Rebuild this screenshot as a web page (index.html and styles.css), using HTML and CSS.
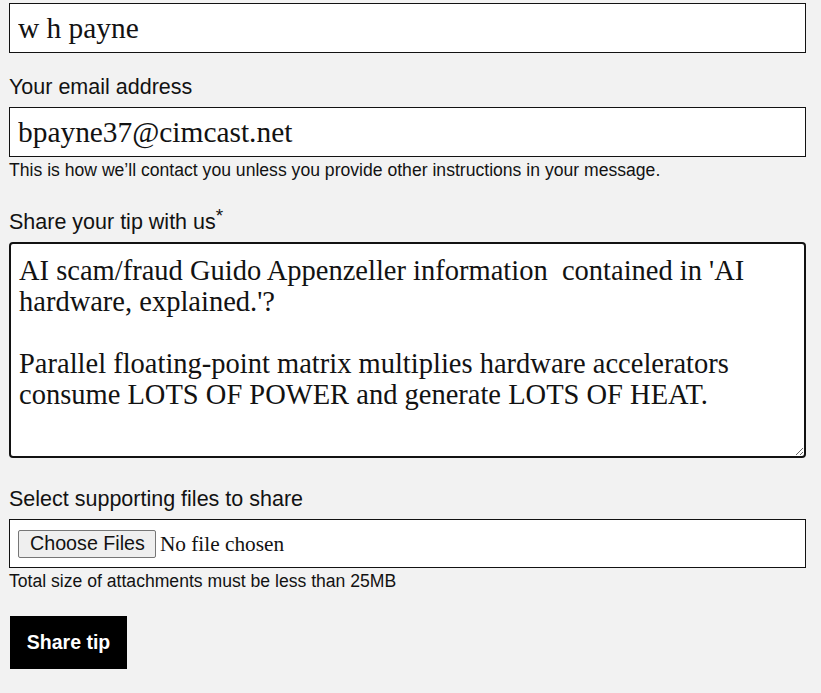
FILE: index.html
```html
<!DOCTYPE html>
<html lang="en">

<head>
    <meta charset="UTF-8">
    <meta name="viewport" content="width=device-width, initial-scale=1.0">
    <title>Share a tip</title>
    <link rel="stylesheet" href="styles.css">
</head>

<body>
    <form class="tipForm">
        <div class="field nameField">
            <input type="text" class="textInput" name="name" value="w h payne">
        </div>

        <div class="field emailField">
            <label class="fieldLabel" for="email">Your email address</label>
            <input type="email" class="textInput" id="email" name="email" value="bpayne37@cimcast.net">
            <p class="hint">This is how we’ll contact you unless you provide other instructions in your message.</p>
        </div>

        <div class="field tipField">
            <label class="fieldLabel" for="tip">Share your tip with us<sup class="req">*</sup></label>
            <textarea class="tipText" id="tip" name="tip">AI scam/fraud Guido Appenzeller information  contained in 'AI hardware, explained.'?

Parallel floating-point matrix multiplies hardware accelerators consume LOTS OF POWER and generate LOTS OF HEAT.</textarea>
        </div>

        <div class="field fileField">
            <label class="fieldLabel" for="files">Select supporting files to share</label>
            <div class="fileBox">
                <input type="file" id="files" name="files" multiple class="fileInput">
            </div>
            <p class="hint">Total size of attachments must be less than 25MB</p>
        </div>

        <button type="button" class="submitBtn">Share tip</button>
    </form>
</body>

</html>
```

FILE: styles.css
```css
body {
    margin: 0;
    background-color: #f2f2f2;
    color: #121212;
    font-family: 'Liberation Sans', Arial, sans-serif;
}

.tipForm {
    width: 797px;
    padding: 3px 0 0 9px;
}

.field {
    display: flex;
    flex-direction: column;
}

.nameField {
    margin-bottom: 21px;
}

.emailField {
    margin-bottom: 29px;
}

.tipField {
    margin-bottom: 28px;
}

.fileField {
    margin-bottom: 25px;
}

.fieldLabel {
    font-size: 21.5px;
    line-height: 26px;
    margin-bottom: 7px;
}

.req {
    font-size: 19px;
    line-height: 0;
    vertical-align: 7px;
}

.textInput {
    box-sizing: border-box;
    height: 50px;
    margin: 0;
    padding: 0 8px;
    border: 1px solid #121212;
    background: #fff;
    font-family: 'Liberation Serif', Georgia, serif;
    font-size: 29.4px;
    color: #121212;
    outline: none;
}

.hint {
    margin: 3px 0 0;
    font-size: 17.6px;
    line-height: 20px;
}

.tipText {
    box-sizing: border-box;
    height: 216px;
    margin: 0;
    padding: 11px 24px 11px 8px;
    border: 2px solid #121212;
    border-radius: 4px;
    background: #fff;
    font-family: 'Liberation Serif', Georgia, serif;
    font-size: 28.5px;
    line-height: 31px;
    color: #121212;
    outline: none;
    resize: vertical;
}

.fileBox {
    box-sizing: border-box;
    height: 49px;
    display: flex;
    align-items: center;
    padding: 0 8px;
    border: 1px solid #121212;
    background: #fff;
}

.fileInput {
    font-family: 'Liberation Serif', Georgia, serif;
    font-size: 21.3px;
    color: #121212;
}

.fileInput::file-selector-button {
    font-family: 'Liberation Sans', Arial, sans-serif;
    font-size: 19.7px;
    height: 28px;
    padding: 0 10px 0 11px;
    margin-right: 4px;
    border: 1px solid #767676;
    border-radius: 2px;
    background: #efefef;
    color: #121212;
}

.submitBtn {
    display: block;
    width: 117px;
    height: 53px;
    padding: 0;
    margin-left: 1px;
    border: none;
    background: #000;
    color: #fff;
    font-family: 'Liberation Sans', Arial, sans-serif;
    font-weight: bold;
    font-size: 19.5px;
    cursor: pointer;
}
```
